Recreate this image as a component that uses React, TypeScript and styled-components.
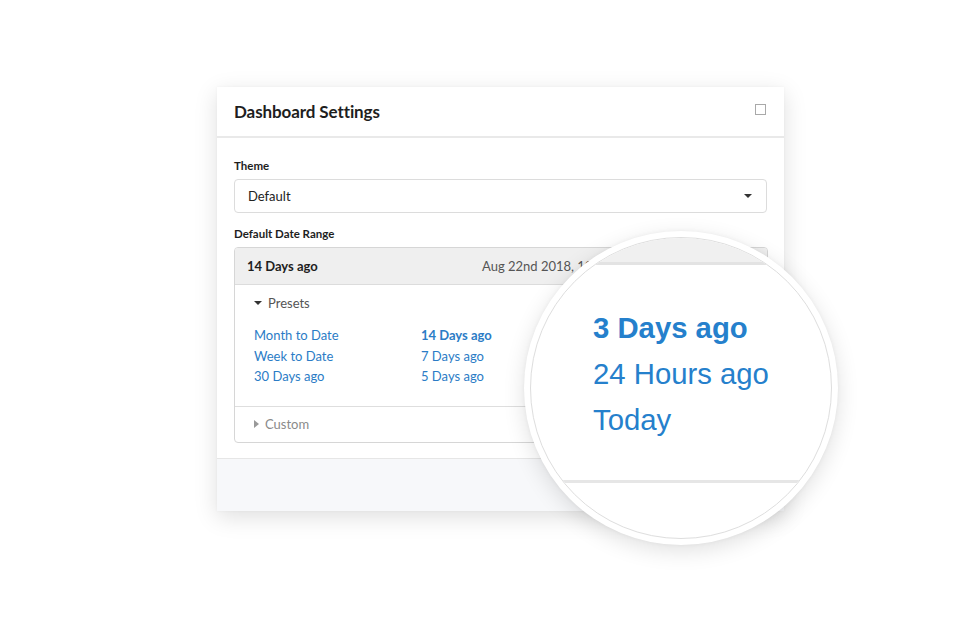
import React from "react";
import styled, { createGlobalStyle } from "styled-components";

const Global = createGlobalStyle`
  html, body { margin: 0; padding: 0; background: #ffffff; }
  body { font-family: Lato, "Open Sans", sans-serif; -webkit-font-smoothing: antialiased; }
  * { box-sizing: border-box; }
`;

const Stage = styled.div`
  position: relative;
  width: 969px;
  height: 632px;
  padding: 87px 0 0 217px;
  overflow: hidden;
`;

const Card = styled.div`
  width: 567px;
  height: 424px;
  background: #fff;
  box-shadow: 0 6px 22px rgba(0, 0, 0, 0.13), 0 0 3px rgba(0, 0, 0, 0.04);
  display: flex;
  flex-direction: column;
`;

const Header = styled.div`
  height: 51px;
  flex: none;
  display: flex;
  align-items: center;
  justify-content: space-between;
  padding: 0 17px;
  border-bottom: 2px solid #e9e9e9;
`;

const Title = styled.h1`
  margin: 0;
  font-size: 17px;
  font-weight: 700;
  color: #1e1e1e;
  letter-spacing: -0.1px;
`;

const CloseBox = styled.span`
  width: 11px;
  height: 11px;
  border: 1.5px solid #a9a9a9;
  margin-top: -4px;
  margin-right: 1px;
`;

const Body = styled.div`
  flex: none;
  padding: 21px 17px 15px;
  border-bottom: 1px solid #e6e6e6;
  display: flex;
  flex-direction: column;
`;

const Label = styled.div<{ $gap?: number }>`
  font-size: 11.5px;
  font-weight: 700;
  color: #1e1e1e;
  line-height: 14px;
  margin-top: ${(p) => p.$gap ?? 0}px;
  margin-bottom: 6px;
`;

const Select = styled.div`
  height: 34px;
  border: 1px solid #dcdcdc;
  border-radius: 4px;
  display: flex;
  align-items: center;
  justify-content: space-between;
  padding: 0 14px 0 13px;
  font-size: 13px;
  color: #222;
`;

const Caret = styled.span<{ $dir?: "down" | "right"; $color?: string }>`
  width: 0;
  height: 0;
  ${(p) =>
    p.$dir === "right"
      ? `border-top: 4px solid transparent; border-bottom: 4px solid transparent; border-left: 5px solid ${p.$color ?? "#888"};`
      : `border-left: 4px solid transparent; border-right: 4px solid transparent; border-top: 4px solid ${p.$color ?? "#333"};`}
`;

const RangeBox = styled.div`
  border: 1px solid #d6d6d6;
  border-radius: 4px;
  overflow: hidden;
  margin-right: -1px;
`;

const RangeHead = styled.div`
  height: 37px;
  background: #efefef;
  border-bottom: 1px solid #dcdcdc;
  display: flex;
  align-items: center;
  justify-content: space-between;
  padding: 0 13px 0 12px;
  font-size: 13px;
`;

const Selected = styled.span`
  font-weight: 700;
  color: #1e1e1e;
`;

const DateText = styled.span`
  width: 272px;
  color: #555;
  white-space: nowrap;
`;

const Section = styled.div<{ $border?: boolean }>`
  padding: 0 19px;
  ${(p) => (p.$border ? "border-top: 1px solid #dedede;" : "")}
`;

const Toggle = styled.div<{ $muted?: boolean; $h: number }>`
  height: ${(p) => p.$h}px;
  display: flex;
  align-items: center;
  gap: 6px;
  font-size: 13px;
  color: ${(p) => (p.$muted ? "#8a8a8a" : "#555")};
`;

const Links = styled.div`
  display: grid;
  grid-template-columns: 167px 167px 1fr;
  grid-auto-rows: 20.5px;
  padding: 4px 0 19px 0;
`;

const LinkItem = styled.a<{ $active?: boolean }>`
  font-size: 13px;
  line-height: 20.5px;
  color: #2b7cc6;
  font-weight: ${(p) => (p.$active ? 700 : 400)};
  text-decoration: none;
  white-space: nowrap;
`;

const Footer = styled.div`
  flex: 1;
  background: #f7f8fa;
`;

const Magnifier = styled.div`
  position: absolute;
  left: 524px;
  top: 231px;
  width: 314px;
  height: 314px;
  border-radius: 50%;
  background: #fff;
  padding: 6px;
  box-shadow: 0 6px 22px rgba(0, 0, 0, 0.12), 0 0 4px rgba(0, 0, 0, 0.05);
`;

const Lens = styled.div`
  width: 100%;
  height: 100%;
  border-radius: 50%;
  border: 1px solid #dedede;
  overflow: hidden;
  display: flex;
  flex-direction: column;
  background: #fff;
`;

const LensBand = styled.div`
  height: 27px;
  flex: none;
  background: #f0f0f0;
  border-bottom: 3px solid #e3e3e3;
`;

const LensList = styled.div`
  flex: none;
  height: 218px;
  display: flex;
  flex-direction: column;
  padding: 40px 0 0 62px;
  border-bottom: 3px solid #e6e6e6;
`;

const LensItem = styled.span<{ $bold?: boolean }>`
  font-family: "Liberation Sans", Arial, sans-serif;
  font-size: 29.3px;
  line-height: 46px;
  color: #2580cc;
  font-weight: ${(p) => (p.$bold ? 700 : 400)};
  white-space: nowrap;
`;

const presets: { label: string; active?: boolean }[][] = [
  [{ label: "Month to Date" }, { label: "14 Days ago", active: true }],
  [{ label: "Week to Date" }, { label: "7 Days ago" }],
  [{ label: "30 Days ago" }, { label: "5 Days ago" }],
];

export default function App() {
  return (
    <>
      <Global />
      <Stage>
        <Card>
          <Header>
            <Title>Dashboard Settings</Title>
            <CloseBox />
          </Header>
          <Body>
            <Label>Theme</Label>
            <Select>
              <span>Default</span>
              <Caret $dir="down" $color="#333" />
            </Select>
            <Label $gap={14}>Default Date Range</Label>
            <RangeBox>
              <RangeHead>
                <Selected>14 Days ago</Selected>
                <DateText>Aug 22nd 2018, 12:00 am - Sep 5th 2018</DateText>
              </RangeHead>
              <Section>
                <Toggle $h={36}>
                  <Caret $dir="down" $color="#333" />
                  Presets
                </Toggle>
                <Links>
                  {presets.map((row) =>
                    [...row, { label: "" }].map((p, i) => (
                      <LinkItem key={p.label + i + row[0].label} $active={p.active}>
                        {p.label}
                      </LinkItem>
                    ))
                  )}
                </Links>
              </Section>
              <Section $border>
                <Toggle $muted $h={35}>
                  <Caret $dir="right" $color="#999" />
                  Custom
                </Toggle>
              </Section>
            </RangeBox>
          </Body>
          <Footer />
        </Card>
        <Magnifier>
          <Lens>
            <LensBand />
            <LensList>
              <LensItem $bold>3 Days ago</LensItem>
              <LensItem>24 Hours ago</LensItem>
              <LensItem>Today</LensItem>
            </LensList>
          </Lens>
        </Magnifier>
      </Stage>
    </>
  );
}
